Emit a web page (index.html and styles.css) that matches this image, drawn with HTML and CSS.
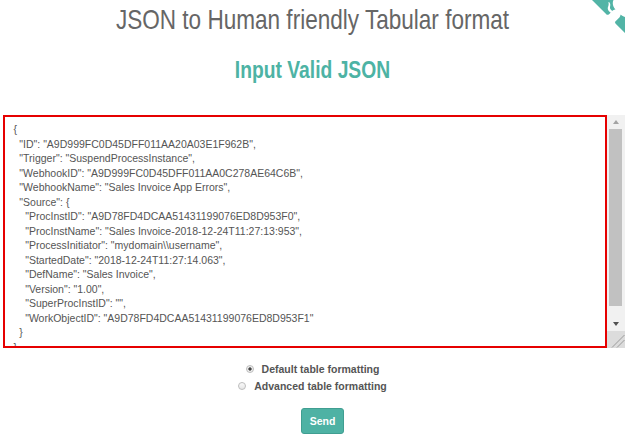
FILE: index.html
```html
<!DOCTYPE html>
<html>
    <head>
        <meta charset="utf-8">
        <title>JSON to Human friendly Tabular format</title>
        <link rel="stylesheet" href="styles.css">
    </head>
    <body>
        <a class="corner" href="#" aria-label="View source on GitHub">
            <svg width="80" height="80" viewBox="0 0 250 250">
                <path d="M0,0 L115,115 L130,115 L142,142 L250,250 L250,0 Z"></path>
                <path class="octo-arm" fill="currentColor" d="M128.3,109.0 C113.8,99.7 119.0,89.6 119.0,89.6 C122.0,82.7 120.5,78.6 120.5,78.6 C119.2,72.0 123.4,76.3 123.4,76.3 C127.3,80.9 125.5,87.3 125.5,87.3 C122.9,97.6 130.6,101.9 134.4,103.2"></path>
                <path class="octo-body" fill="currentColor" d="M115.0,115.0 C114.9,115.1 118.7,116.5 119.8,115.4 L133.7,101.6 C136.9,99.2 139.9,98.4 142.2,98.6 C133.8,88.0 127.5,74.4 143.8,58.0 C148.5,53.4 154.0,51.2 159.7,51.0 C160.3,49.4 163.2,43.6 171.4,40.1 C171.4,40.1 176.1,42.5 178.8,56.2 C183.1,58.6 187.2,61.8 190.9,65.4 C194.5,69.0 197.7,73.2 200.1,77.6 C213.8,80.2 216.3,84.9 216.3,84.9 C212.7,93.1 206.9,96.0 205.4,96.6 C205.1,102.4 203.0,107.8 198.3,112.5 C181.9,128.9 168.3,122.5 157.7,114.1 C157.9,116.9 156.7,120.9 152.7,124.9 L141.0,136.5 C139.8,137.7 141.6,141.9 141.8,141.8 Z"></path>
            </svg>
        </a>

        <h1 class="title">JSON to Human friendly Tabular format</h1>
        <h2 class="subtitle">Input Valid JSON</h2>

        <div class="editor">
            <textarea id="json" spellcheck="false">{
  "ID": "A9D999FC0D45DFF011AA20A03E1F962B",
  "Trigger": "SuspendProcessInstance",
  "WebhookID": "A9D999FC0D45DFF011AA0C278AE64C6B",
  "WebhookName": "Sales Invoice App Errors",
  "Source": {
    "ProcInstID": "A9D78FD4DCAA51431199076ED8D953F0",
    "ProcInstName": "Sales Invoice-2018-12-24T11:27:13:953",
    "ProcessInitiator": "mydomain\\username",
    "StartedDate": "2018-12-24T11:27:14.063",
    "DefName": "Sales Invoice",
    "Version": "1.00",
    "SuperProcInstID": "",
    "WorkObjectID": "A9D78FD4DCAA51431199076ED8D953F1"
  }
}</textarea>
            <div class="scrollbar">
                <div class="arrow up"><span></span></div>
                <div class="thumb"></div>
                <div class="track"></div>
                <div class="arrow down"><span></span></div>
                <div class="grip">
                    <svg width="18" height="17" viewBox="0 0 18 17">
                        <path d="M5,16.5 L17.5,4 M10,16.5 L17.5,9"></path>
                    </svg>
                </div>
            </div>
        </div>

        <div class="options">
            <label class="option">
                <input type="radio" name="format" value="default" checked>
                <span>Default table formatting</span>
            </label>
            <label class="option">
                <input type="radio" name="format" value="advanced">
                <span>Advanced table formatting</span>
            </label>
        </div>

        <div class="actions">
            <button class="send">Send</button>
        </div>
    </body>
</html>
```

FILE: styles.css
```css
html,
body {
    margin: 0;
    height: 100%;
    overflow: hidden;
}
body {
    position: relative;
    background-color: white;
    font-family: "Liberation Sans", Arial, sans-serif;
    color: #555;
}
.corner {
    position: absolute;
    top: -22px;
    right: -25px;
    width: 80px;
    height: 80px;
    fill: #52b4a6;
    color: white;
}
.corner svg {
    display: block;
}
/* headings use a narrow face; no narrow font is installed, so squeeze Arial */
.title,
.subtitle {
    font-family: "Liberation Sans", Arial, sans-serif;
    text-align: center;
    transform: scaleX(0.82);
}
.title {
    margin: 0;
    padding-top: 4px;
    font-size: 27.5px;
    font-weight: normal;
    line-height: 32px;
    color: #666;
}
.subtitle {
    margin: 20px 0 0;
    font-size: 23.5px;
    font-weight: bold;
    line-height: 28px;
    color: #4db3a4;
}
.editor {
    display: flex;
    height: 233px;
    margin: 31px 0 0 3px;
}
.editor textarea {
    flex: 1;
    box-sizing: border-box;
    height: 100%;
    margin: 0;
    padding: 5px 8.5px;
    border: 2px solid #e60000;
    font-family: "Liberation Sans", Arial, sans-serif;
    font-size: 10.5px;
    line-height: 14.5px;
    color: #555;
    resize: none;
    overflow: hidden;
    outline: none;
}
.scrollbar {
    display: flex;
    flex-direction: column;
    width: 18px;
    background-color: #f1f1f1;
}
.scrollbar .arrow {
    display: flex;
    align-items: center;
    justify-content: center;
}
.scrollbar .arrow span {
    width: 0;
    height: 0;
    border-left: 3.5px solid transparent;
    border-right: 3.5px solid transparent;
}
.scrollbar .up {
    height: 14px;
}
.scrollbar .up span {
    border-bottom: 4px solid #a3a3a3;
}
.scrollbar .down {
    height: 15px;
}
.scrollbar .down span {
    border-top: 4px solid #505050;
}
.scrollbar .thumb {
    height: 177px;
    margin: 0 3px 0 2px;
    background-color: #c1c1c1;
}
.scrollbar .track {
    flex: 1;
}
.scrollbar .grip {
    height: 17px;
    background-color: #dcdcdc;
}
.scrollbar .grip svg {
    display: block;
    stroke: #9a9a9a;
    stroke-width: 1;
    fill: none;
}
.options {
    margin-top: 12.5px;
}
.option {
    display: flex;
    align-items: center;
    justify-content: center;
    gap: 8px;
    height: 17px;
    font-size: 10.5px;
    font-weight: bold;
    color: #555;
}
.option input {
    appearance: none;
    box-sizing: border-box;
    width: 8px;
    height: 8px;
    margin: 0;
    border: 1px solid #bdbdbd;
    border-radius: 50%;
    background: linear-gradient(#fafafa, #e6e6e6);
}
.option input:checked {
    background: radial-gradient(circle, #444 0, #444 1.3px, #eeeeee 2px);
}
.actions {
    margin-top: 13.5px;
    text-align: center;
}
.send {
    height: 26px;
    margin: 0 0 0 20px;
    padding: 0 8px;
    border: 1px solid #409e91;
    border-radius: 3px;
    background-color: #4eb2a4;
    font-family: "Liberation Sans", Arial, sans-serif;
    font-size: 10.5px;
    font-weight: bold;
    color: white;
    cursor: pointer;
}
```
